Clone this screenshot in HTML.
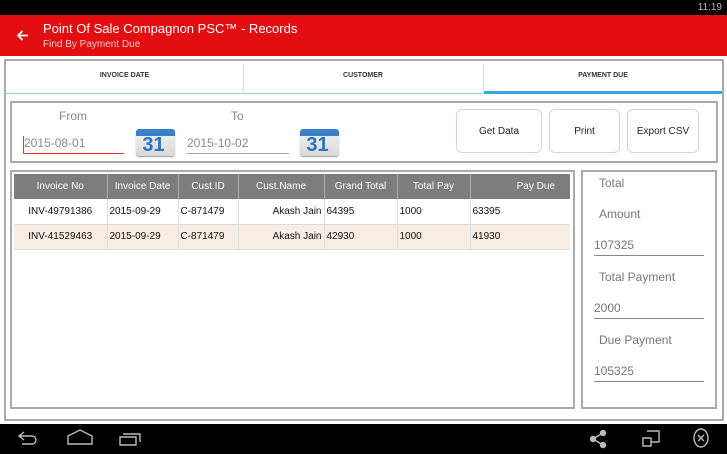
<!DOCTYPE html>
<html><head><meta charset="utf-8"><style>
*{margin:0;padding:0;box-sizing:border-box}
body{width:727px;height:454px;overflow:hidden;background:#fff;font-family:"Liberation Sans",sans-serif;position:relative}
.a{position:absolute}
.cal{position:absolute;width:39px;height:27px;border-radius:3px;background:linear-gradient(#f4f4f4,#d8d8d8);box-shadow:0 1px 1px #999;overflow:hidden}
.cal:before{content:"";position:absolute;left:0;top:0;right:0;height:7px;background:#3a7fc8}
.cal span{position:absolute;left:0;right:4px;top:6px;text-align:center;font:bold 20px "Liberation Sans";color:#2a72c6;line-height:21px}
.btn{position:absolute;top:109px;height:44px;border:1px solid #d4d4e0;border-radius:6px;font-size:10px;color:#222;display:flex;align-items:center;justify-content:center;background:#fff}
table{border-collapse:collapse;font-size:10px}
th{background:#7d7d7d;color:#fff;font-weight:normal;height:25px;border-right:1px solid #aaa}
td{height:25px;color:#111;border-right:1px solid #ddd;border-bottom:1px solid #ddd;padding:0 2px}
.lbl{position:absolute;font-size:12px;color:#777}
.val{position:absolute;font-size:12px;color:#777;border-bottom:1px solid #888;width:110px;padding-bottom:3px}
</style></head><body>
<div class="a" style="left:0;top:0;width:727px;height:15px;background:#000"></div>
<div class="a" style="right:5px;top:2px;color:#bbb;font-size:10px">11:19</div>
<div class="a" style="left:0;top:15px;width:727px;height:41px;background:#e20e12"></div>
<svg class="a" style="left:16px;top:29px" width="13" height="13" viewBox="0 0 13 13"><path d="M12 6.5H2M6.5 2L2 6.5 6.5 11" stroke="#fff" stroke-width="1.8" fill="none"/></svg>
<div class="a" style="left:43px;top:21px;color:#fff;font-size:13px">Point Of Sale Compagnon PSC™ - Records</div>
<div class="a" style="left:43px;top:39px;color:#f6c8c8;font-size:10px">Find By Payment Due</div>

<div class="a" style="left:4px;top:59px;width:720px;height:362px;border:2px solid #aaa;background:#fff"></div>
<div class="a" style="left:6px;top:93px;width:716px;height:1px;background:#8fd3f4"></div>
<div class="a" style="left:484px;top:91px;width:238px;height:3px;background:#33aadf"></div>
<div class="a" style="left:243px;top:64px;width:1px;height:28px;background:#ddd"></div>
<div class="a" style="left:483px;top:64px;width:1px;height:28px;background:#ddd"></div>
<div class="a" style="left:6px;top:72px;width:237px;text-align:center;font-size:7px;font-weight:bold;color:#333">INVOICE DATE</div>
<div class="a" style="left:243px;top:72px;width:240px;text-align:center;font-size:7px;font-weight:bold;color:#333">CUSTOMER</div>
<div class="a" style="left:484px;top:72px;width:238px;text-align:center;font-size:7px;font-weight:bold;color:#333">PAYMENT DUE</div>

<div class="a" style="left:10px;top:101px;width:708px;height:62px;border:2px solid #aaa"></div>
<div class="a" style="left:59px;top:109px;font-size:12px;color:#888">From</div>
<div class="a" style="left:231px;top:109px;font-size:12px;color:#888">To</div>
<div class="a" style="left:23px;top:136px;font-size:12px;color:#888;width:101px;border-bottom:1px solid #e33;padding-bottom:3px;border-left:1px solid #e33;padding-left:0">2015-08-01</div>
<div class="a" style="left:187px;top:136px;font-size:12px;color:#888;width:102px;border-bottom:1px solid #aaa;padding-bottom:3px">2015-10-02</div>
<div class="cal" style="left:136px;top:129px"><span>31</span></div>
<div class="cal" style="left:300px;top:129px"><span>31</span></div>
<div class="btn" style="left:456px;width:86px">Get Data</div>
<div class="btn" style="left:549px;width:71px">Print</div>
<div class="btn" style="left:627px;width:72px">Export CSV</div>

<div class="a" style="left:10px;top:170px;width:565px;height:239px;border:2px solid #aaa"></div>
<table class="a" style="left:14px;top:174px;width:556px">
<tr><th style="width:93px">Invoice No</th><th style="width:71px">Invoice Date</th><th style="width:60px">Cust.ID</th><th style="width:86px">Cust.Name</th><th style="width:73px">Grand Total</th><th style="width:73px">Total Pay</th><th style="text-align:right;padding-right:15px;border:none">Pay Due</th></tr>
<tr><td style="text-align:center">INV-49791386</td><td>2015-09-29</td><td>C-871479</td><td style="text-align:right">Akash Jain</td><td>64395</td><td>1000</td><td style="border-right:none">63395</td></tr>
<tr style="background:#f8ede3"><td style="text-align:center">INV-41529463</td><td>2015-09-29</td><td>C-871479</td><td style="text-align:right">Akash Jain</td><td>42930</td><td>1000</td><td style="border-right:none">41930</td></tr>
</table>

<div class="a" style="left:581px;top:170px;width:136px;height:239px;border:2px solid #aaa"></div>
<div class="lbl" style="left:599px;top:176px">Total</div>
<div class="lbl" style="left:599px;top:207px">Amount</div>
<div class="val" style="left:594px;top:238px">107325</div>
<div class="lbl" style="left:599px;top:270px">Total Payment</div>
<div class="val" style="left:594px;top:301px">2000</div>
<div class="lbl" style="left:599px;top:333px">Due Payment</div>
<div class="val" style="left:594px;top:364px">105325</div>

<div class="a" style="left:0;top:424px;width:727px;height:30px;background:#000"></div>
<svg class="a" style="left:0;top:424px" width="727" height="30" viewBox="0 0 727 30" fill="none" stroke="#bbb" stroke-width="1.4">
<path d="M24 8l-5 4 5 4M19 12h13a4 4 0 0 1 0 8h-10"/>
<path d="M68 12l12-6 12 6v8H68z"/>
<path d="M120 13h16v8H120zM123 10h17v8"/>
<circle cx="593" cy="15" r="2.5" fill="#bbb"/><circle cx="603" cy="9" r="2.5" fill="#bbb"/><circle cx="603" cy="21" r="2.5" fill="#bbb"/><path d="M593 15l10-6M593 15l10 6"/>
<path d="M643 14h8v8h-8zM647 7h12v11h-8"/>
<ellipse cx="701" cy="14" rx="7" ry="9"/><path d="M698 11l6 6M704 11l-6 6"/>
</svg>
</body></html>
